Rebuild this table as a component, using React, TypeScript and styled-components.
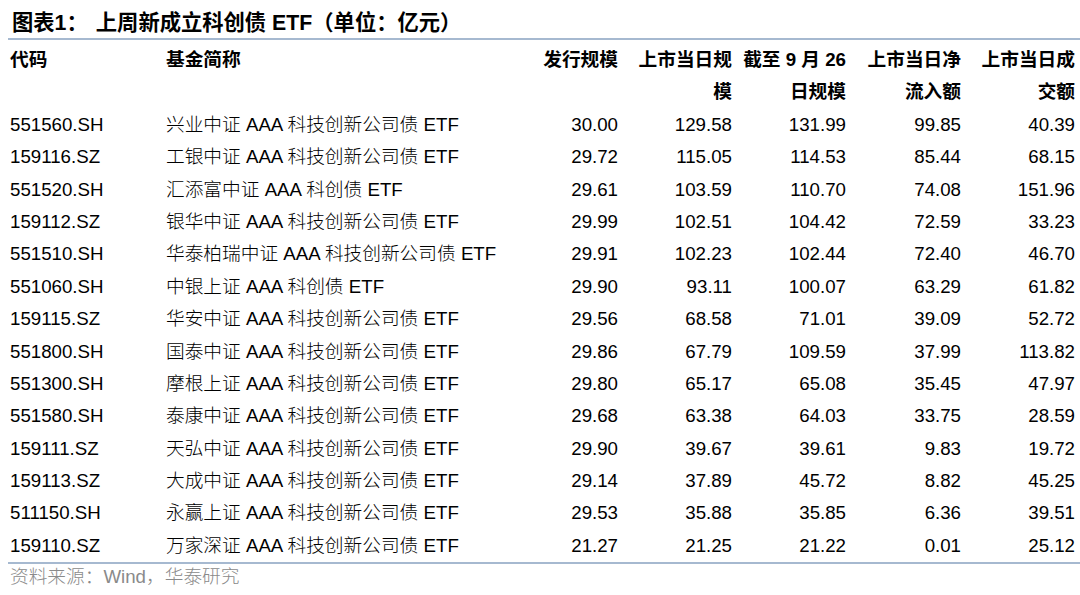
import React, { FC } from 'react'
import styled, { createGlobalStyle } from 'styled-components'

const GlobalStyle = createGlobalStyle`
  html, body {
    margin: 0;
    padding: 0;
    background: #ffffff;
  }
  body {
    font-family: 'Liberation Sans', 'Noto Sans CJK SC', sans-serif;
    color: #000000;
  }
`

const LINE = '#a6b9d0'
const COLS = '156px 338px 114px 114px 114px 115px 114px'

const PAGE = styled.div`
  width: 1080px;
  height: 595px;
  box-sizing: border-box;
  padding: 0 0 0 8px;
  overflow: hidden;
`

const TITLE = styled.div`
  height: 40px;
  box-sizing: border-box;
  padding: 7px 0 0 4px;
  line-height: 32px;
  font-size: 21.3px;
  font-weight: 700;
  border-bottom: 2px solid ${LINE};
  white-space: nowrap;

  .gap {
    display: inline-block;
    width: 8px;
  }
`

const TABLE = styled.div`
  margin-top: 4px;
  padding: 0 5px 0 2px;
  border-bottom: 2px solid ${LINE};
`

const ROW = styled.div<{ $head?: boolean }>`
  display: grid;
  grid-template-columns: ${COLS};
  font-size: 18.7px;
  line-height: 32.4px;
  height: ${({ $head }) => ($head ? '64.8px' : '32.4px')};
  font-weight: ${({ $head }) => ($head ? 700 : 400)};
  white-space: nowrap;
`

const CELL = styled.div<{ $num?: boolean }>`
  text-align: ${({ $num }) => ($num ? 'right' : 'left')};
`

// CJK spans keep line-height: 1 so the Noto metrics don't stretch the row
const CJK = styled.span<{ $bold?: boolean }>`
  font-family: 'Noto Sans CJK SC', sans-serif;
  font-weight: ${({ $bold }) => ($bold ? 700 : 300)};
  line-height: 1;
`

const SOURCE = styled.div`
  padding: 0 0 0 2px;
  font-size: 18.7px;
  line-height: 26px;
  color: #8a8a8a;
`

type Fund = [string, string, string, string, string, string, string]

const funds: Fund[] = [
  ['551560.SH', '兴业中证', '30.00', '129.58', '131.99', '99.85', '40.39'],
  ['159116.SZ', '工银中证', '29.72', '115.05', '114.53', '85.44', '68.15'],
  ['551520.SH', '汇添富中证|科创债', '29.61', '103.59', '110.70', '74.08', '151.96'],
  ['159112.SZ', '银华中证', '29.99', '102.51', '104.42', '72.59', '33.23'],
  ['551510.SH', '华泰柏瑞中证', '29.91', '102.23', '102.44', '72.40', '46.70'],
  ['551060.SH', '中银上证|科创债', '29.90', '93.11', '100.07', '63.29', '61.82'],
  ['159115.SZ', '华安中证', '29.56', '68.58', '71.01', '39.09', '52.72'],
  ['551800.SH', '国泰中证', '29.86', '67.79', '109.59', '37.99', '113.82'],
  ['551300.SH', '摩根上证', '29.80', '65.17', '65.08', '35.45', '47.97'],
  ['551580.SH', '泰康中证', '29.68', '63.38', '64.03', '33.75', '28.59'],
  ['159111.SZ', '天弘中证', '29.90', '39.67', '39.61', '9.83', '19.72'],
  ['159113.SZ', '大成中证', '29.14', '37.89', '45.72', '8.82', '45.25'],
  ['511150.SH', '永赢上证', '29.53', '35.88', '35.85', '6.36', '39.51'],
  ['159110.SZ', '万家深证', '21.27', '21.25', '21.22', '0.01', '25.12'],
]

const FundName: FC<{ spec: string }> = ({ spec }) => {
  const [prefix, kind = '科技创新公司债'] = spec.split('|')
  return (
    <CELL>
      <CJK>{prefix}</CJK> AAA <CJK>{kind}</CJK> ETF
    </CELL>
  )
}

const App: FC = () => (
  <>
    <GlobalStyle />
    <PAGE>
      <TITLE>
        <CJK $bold>图表</CJK>1<CJK $bold>：</CJK>
        <span className="gap" />
        <CJK $bold>上周新成立科创债</CJK> ETF<CJK $bold>（单位：亿元）</CJK>
      </TITLE>
      <TABLE>
        <ROW $head>
          <CELL><CJK $bold>代码</CJK></CELL>
          <CELL><CJK $bold>基金简称</CJK></CELL>
          <CELL $num><CJK $bold>发行规模</CJK></CELL>
          <CELL $num>
            <CJK $bold>上市当日规</CJK>
            <br />
            <CJK $bold>模</CJK>
          </CELL>
          <CELL $num>
            <CJK $bold>截至</CJK> 9 <CJK $bold>月</CJK> 26
            <br />
            <CJK $bold>日规模</CJK>
          </CELL>
          <CELL $num>
            <CJK $bold>上市当日净</CJK>
            <br />
            <CJK $bold>流入额</CJK>
          </CELL>
          <CELL $num>
            <CJK $bold>上市当日成</CJK>
            <br />
            <CJK $bold>交额</CJK>
          </CELL>
        </ROW>
        {funds.map((f) => (
          <ROW key={f[0]}>
            <CELL>{f[0]}</CELL>
            <FundName spec={f[1]} />
            {f.slice(2).map((v, i) => (
              <CELL $num key={i}>
                {v}
              </CELL>
            ))}
          </ROW>
        ))}
      </TABLE>
      <SOURCE>
        <CJK>资料来源：</CJK>Wind<CJK>，华泰研究</CJK>
      </SOURCE>
    </PAGE>
  </>
)

export default App
